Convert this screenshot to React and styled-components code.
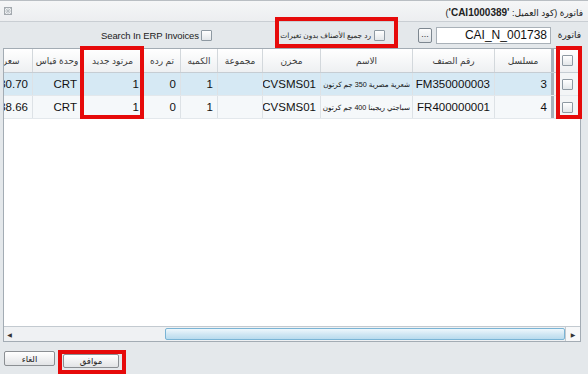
import React from "react";
import styled, { createGlobalStyle } from "styled-components";

const GlobalStyle = createGlobalStyle`
  html, body {
    margin: 0;
    padding: 0;
  }
  body {
    background: #e4e8eb;
    font-family: "Liberation Sans", "DejaVu Sans", sans-serif;
  }
`;

const Window = styled.div`
  position: relative;
  width: 588px;
  height: 374px;
  display: flex;
  flex-direction: column;
  background: #e4e8eb;
  overflow: hidden;
`;

const TitleBar = styled.div`
  flex: none;
  height: 20px;
  display: flex;
  align-items: center;
  justify-content: space-between;
  padding: 0 5px 0 4px;
  background: linear-gradient(#f5f6f7, #eceef0);
  border-top: 1px solid #b9bec3;
  border-bottom: 1px solid #c9ced3;
`;

const Title = styled.div`
  direction: rtl;
  font-size: 9px;
  color: #222;
  white-space: nowrap;
  padding-top: 2px;

  b {
    font-size: 10px;
    font-weight: bold;
  }
`;

const Toolbar = styled.div`
  flex: none;
  height: 26px;
  display: flex;
  direction: rtl;
  align-items: center;
  padding-right: 7px;
`;

const Label = styled.span`
  flex: none;
  width: ${(p) => p.$w}px;
  font-size: ${(p) => p.$size || 9}px;
  letter-spacing: ${(p) => p.$track || 0}px;
  color: #222;
  direction: ${(p) => (p.$ltr ? "ltr" : "rtl")};
  text-align: right;
  margin-left: ${(p) => p.$gap || 0}px;
  white-space: nowrap;
`;

const TextInput = styled.div`
  flex: none;
  width: 115px;
  height: 17px;
  box-sizing: border-box;
  border: 1px solid #a9b1b8;
  background: #fff;
  font-size: 12px;
  line-height: 15px;
  padding-right: 3px;
  color: #111;
  margin-left: 4px;
`;

const DotsButton = styled.div`
  flex: none;
  width: 14px;
  height: 15px;
  box-sizing: border-box;
  border: 1px solid #7d8790;
  border-radius: 2px;
  background: linear-gradient(#fdfdfd, #dfe3e6);
  font-size: 9px;
  line-height: 10px;
  text-align: center;
  color: #333;
  margin-left: ${(p) => p.$gap || 0}px;
`;

const Check = styled.span`
  flex: none;
  display: inline-block;
  width: 11px;
  height: 11px;
  box-sizing: border-box;
  border: 1px solid #8e99a2;
  border-radius: 1px;
  background: linear-gradient(#ffffff, #e3e7ea);
  margin-left: ${(p) => p.$gap || 0}px;
`;

const Grid = styled.div`
  flex: none;
  height: 294px;
  box-sizing: border-box;
  margin: 0 7px 0 3px;
  border: 1px solid #a3acb4;
  background: #fff;
  display: flex;
  flex-direction: column;
  overflow: hidden;
`;

const GridBody = styled.div`
  flex: 1;
  overflow: hidden;
  direction: rtl;
`;

const Row = styled.div`
  display: flex;
  height: ${(p) => (p.$head ? 23 : 22)}px;
  background: ${(p) => p.$bg || "#fff"};
  border-bottom: 1px solid ${(p) => (p.$head ? "#c6cdd3" : "#e3e8ec")};
`;

const Cell = styled.div`
  flex: none;
  width: ${(p) => p.$w}px;
  box-sizing: border-box;
  border-left: 1px solid #dde2e6;
  padding: 0 ${(p) => (p.$small ? 2 : 4)}px;
  display: flex;
  align-items: center;
  justify-content: flex-start;
  white-space: nowrap;
  overflow: hidden;
  font-size: ${(p) => (p.$small ? 7.2 : 11.5)}px;
  color: #111;
`;

const HeadCell = styled(Cell)`
  justify-content: center;
  padding: 0 2px;
  font-size: 9px;
  color: #3b3b3b;
  border-left-color: #d3d8dc;
  background: linear-gradient(#ffffff, #eef0f2);
`;

const CheckCell = styled.div`
  flex: none;
  width: 29px;
  box-sizing: border-box;
  border-left: 3px solid #a7b1ba;
  display: flex;
  align-items: center;
  justify-content: center;
  background: ${(p) => (p.$head ? "linear-gradient(#ffffff, #eef0f2)" : "#f3f5f6")};
`;

const ScrollBar = styled.div`
  flex: none;
  height: 15px;
  box-sizing: border-box;
  border-top: 1px solid #c3cad0;
  background: #eff1f3;
  display: flex;
  align-items: stretch;
`;

const ScrollArrow = styled.div`
  flex: none;
  width: ${(p) => p.$w}px;
  display: flex;
  align-items: center;
  justify-content: center;
  font-size: 6px;
  color: #333;
  border-left: ${(p) => (p.$right ? "1px solid #c3cad0" : "none")};
  background: ${(p) => (p.$right ? "#f7f8f9" : "transparent")};
`;

const ScrollTrack = styled.div`
  flex: 1;
  display: flex;
  padding: 1px 0;
  padding-left: 150px;
`;

const Thumb = styled.div`
  flex: 1;
  box-sizing: border-box;
  border: 1px solid #7ab4d5;
  border-radius: 2px;
  background: linear-gradient(#eef7fc, #cfe6f3 55%, #b9dbee);
`;

const Footer = styled.div`
  flex: 1;
  display: flex;
  align-items: flex-start;
  gap: 8px;
  padding: 9px 0 0 4px;
`;

const Button = styled.div`
  width: ${(p) => p.$w}px;
  height: ${(p) => p.$h}px;
  margin-top: ${(p) => p.$drop || 0}px;
  box-sizing: border-box;
  border: 1px solid #8b8f93;
  border-radius: 2px;
  background: linear-gradient(#ffffff, #e2e4e6);
  font-size: 8.5px;
  color: #222;
  display: flex;
  align-items: center;
  justify-content: center;
`;

const Mark = styled.div`
  position: absolute;
  left: ${(p) => p.$x}px;
  top: ${(p) => p.$y}px;
  width: ${(p) => p.$w}px;
  height: ${(p) => p.$h}px;
  box-sizing: border-box;
  border: 4px solid #e60a0a;
  pointer-events: none;
`;

const columns = [
  { key: "serial", title: "مسلسل", w: 57 },
  { key: "code", title: "رقم الصنف", w: 82 },
  { key: "name", title: "الاسم", w: 92, small: true },
  { key: "store", title: "مخزن", w: 58 },
  { key: "group", title: "مجموعة", w: 45 },
  { key: "qty", title: "الكميه", w: 37 },
  { key: "ret", title: "تم رده", w: 37 },
  { key: "newRet", title: "مرتود جديد", w: 62 },
  { key: "unit", title: "وحدة قياس", w: 49 },
  { key: "price", title: "سعر الوحدة", w: 70 },
  { key: "total", title: "الاجمالي", w: 60 },
];

const rows = [
  {
    serial: "3",
    code: "FM350000003",
    name: "شعرية مصرية 350 جم كرتون",
    store: "CVSMS01",
    group: "",
    qty: "1",
    ret: "0",
    newRet: "1",
    unit: "CRT",
    price: "30.70",
    total: "30.70",
    bg: "#d6e9f4",
  },
  {
    serial: "4",
    code: "FR400000001",
    name: "سباجتي ريجينا 400 جم كرتون",
    store: "CVSMS01",
    group: "",
    qty: "1",
    ret: "0",
    newRet: "1",
    unit: "CRT",
    price: "38.66",
    total: "38.66",
    bg: "#f5f8fa",
  },
];

function WinIcon() {
  return (
    <svg width="8" height="8" viewBox="0 0 8 8">
      <rect x="0.5" y="0.5" width="7" height="7" fill="none" stroke="#a3a9ae" />
      <path d="M1 1 L7 7 M7 1 L1 7 M4 1 V7 M1 4 H7" stroke="#b4babf" strokeWidth="0.8" />
    </svg>
  );
}

export default function App() {
  return (
    <>
      <GlobalStyle />
      <Window>
        <TitleBar>
          <WinIcon />
          <Title>
            فاتورة (كود العميل: <b>'CAI1000389'</b>)
          </Title>
        </TitleBar>

        <Toolbar>
          <Label $w={20} $gap={10}>
            فاتورة
          </Label>
          <TextInput>CAI_N_001738</TextInput>
          <DotsButton $gap={33}>...</DotsButton>
          <Check $gap={3} />
          <Label $w={87} $size={7.4} $gap={72}>
            رد جميع الأصناف بدون تغيرات
          </Label>
          <Check $gap={4} />
          <Label $w={96} $size={9.5} $track={-0.1} $ltr>
            Search In ERP Invoices
          </Label>
        </Toolbar>

        <Grid>
          <GridBody>
            <Row $head>
              <CheckCell $head>
                <Check />
              </CheckCell>
              {columns.map((c) => (
                <HeadCell key={c.key} $w={c.w}>
                  {c.title}
                </HeadCell>
              ))}
            </Row>
            {rows.map((r) => (
              <Row key={r.serial} $bg={r.bg}>
                <CheckCell>
                  <Check />
                </CheckCell>
                {columns.map((c) => (
                  <Cell key={c.key} $w={c.w} $small={c.small}>
                    {r[c.key]}
                  </Cell>
                ))}
              </Row>
            ))}
          </GridBody>
          <ScrollBar>
            <ScrollArrow $w={11}>◀</ScrollArrow>
            <ScrollTrack>
              <Thumb />
            </ScrollTrack>
            <ScrollArrow $w={14} $right>
              ▶
            </ScrollArrow>
          </ScrollBar>
        </Grid>

        <Footer>
          <Button $w={51} $h={15}>الغاء</Button>
          <Button $w={56} $h={14} $drop={3}>
            موافق
          </Button>
        </Footer>

        <Mark $x={275} $y={17} $w={123} $h={31} />
        <Mark $x={80} $y={46} $w={64} $h={73} />
        <Mark $x={556} $y={46} $w={26} $h={73} />
        <Mark $x={58} $y={350} $w={68} $h={24} />
      </Window>
    </>
  );
}
